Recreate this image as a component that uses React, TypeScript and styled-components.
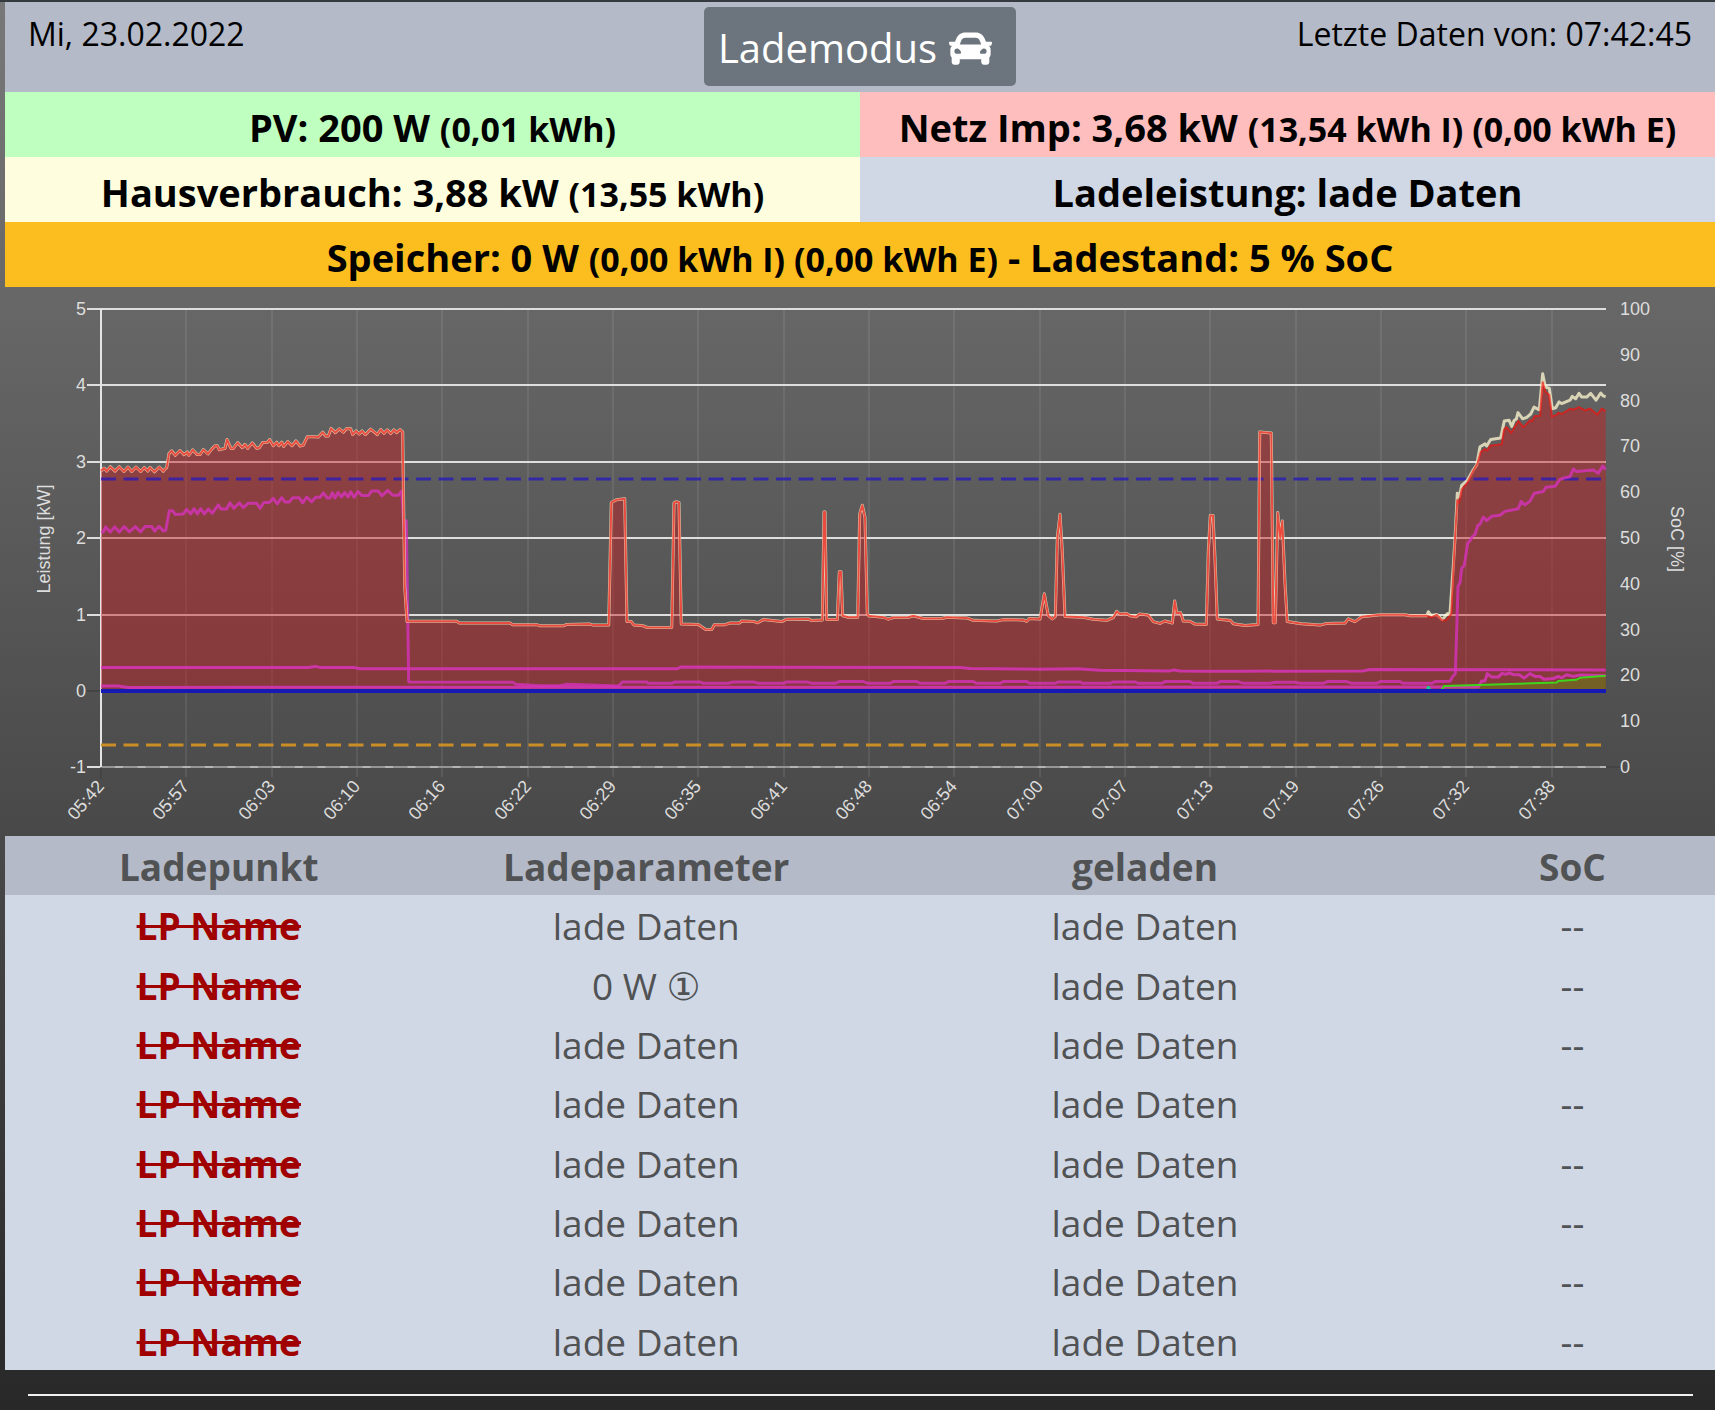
import React from 'react';
import styled, { createGlobalStyle } from 'styled-components';
import { FaCar } from 'react-icons/fa';

const GlobalStyle = createGlobalStyle`
  * { box-sizing: border-box; }
  html { background: #282828; }
  body {
    margin: 0;
    font-family: "Open Sans", "Noto Sans", "Noto Sans CJK JP", sans-serif;
    color: #000;
  }
`;

const Page = styled.div`
  min-height: 100vh;
  padding-left: 5px;
  border-top: 2px solid #343a40;
  background: linear-gradient(#787878, #282828);
`;

const Header = styled.header`
  display: grid;
  grid-template-columns: 1fr auto 1fr;
  align-items: start;
  height: 90px;
  padding: 5px 23px;
  background: #b4bac8;
`;

const HeaderText = styled.div<{ $end?: boolean }>`
  padding-top: 6px;
  font-size: 32px;
  line-height: 42px;
  text-align: ${(p) => (p.$end ? 'right' : 'left')};
`;

const ModeButton = styled.button`
  display: flex;
  align-items: center;
  gap: 12px;
  height: 79px;
  padding: 3px 24px 0 14px;
  border: 0;
  border-radius: 5px;
  background: #6c757d;
  color: #fff;
  font: inherit;
  font-size: 40px;
  line-height: 60px;
  cursor: pointer;
`;

const Metrics = styled.section`
  display: grid;
  grid-template-columns: 1fr 1fr;
`;

const Metric = styled.div<{ $bg: string; $wide?: boolean }>`
  grid-column: ${(p) => (p.$wide ? '1 / -1' : 'auto')};
  height: 65px;
  padding-top: 4px;
  background: ${(p) => p.$bg};
  font-size: 38px;
  font-weight: 700;
  line-height: 62px;
  text-align: center;
  white-space: nowrap;
`;

const Small = styled.span`
  font-size: 34px;
`;

const ChartSvg = styled.svg`
  display: block;
  width: 100%;
  height: auto;
  font-family: "Liberation Sans", Arial, sans-serif;
  font-size: 18px;
  fill: #ddd;
`;

const Table = styled.table`
  width: 100%;
  height: 534px;
  table-layout: fixed;
  border-collapse: collapse;
  background: #d0d8e6;
  color: #505254;
  font-size: 37px;
  line-height: 56px;
  text-align: center;
`;

const HeadRow = styled.tr`
  background: #b4bac8;
`;

const HeadCell = styled.th<{ $width: string }>`
  width: ${(p) => p.$width};
  padding: 3px 0 0;
  font-weight: 700;
`;

const Cell = styled.td`
  padding: 3px 0 0;
`;

const PointName = styled.span`
  color: #a00000;
  font-weight: 700;
  text-decoration: line-through;
  text-decoration-thickness: 3px;
`;

const Phase = styled.span`
  font-family: "DejaVu Sans", sans-serif;
  font-size: 38px;
  line-height: 1;
`;

const Divider = styled.hr`
  height: 2px;
  margin: 24px 22px 0 23px;
  border: 0;
  background: #f0f0f0;
`;

/* Samples are kept in a compact form: each segment has its own start, a sample's
   offset is in thirds of a unit and its level counts down from the chart's top. */
type Segment = [number, string];

const toPoints = (segments: Segment[]) =>
  segments
    .map(([start, samples]) =>
      samples
        .trim()
        .split(/\s+/)
        .map((s) => {
          const [x, y] = s.split(',').map(Number);
          return `${(start + x / 3).toFixed(1)},${(290 + y / 2.9037).toFixed(1)}`;
        })
        .join(' '),
    )
    .join(' ');

const gridBase: Segment[] = [
  [0, `303,525 312,517 320,526 331,513 345,526 358,513 372,527 384,514 395,527 408,514 422,527 433,515 443,526 450,515 463,528 478,514 490,526 500,515 507,475 515,467 526,480 540,466 552,478 562,470 566,480 578,464 592,478 600,478 610,463 624,476 635,462 645,452 652,452 658,464 675,460 681,434 693,460 700,460 713,443 727,458 735,448 743,460 757,444 770,460 778,458 788,443 803,442 809,434 820,452 830,442 837,452 845,442 851,454 863,440 876,452 888,438 900,453 910,450 922,426 945,426 955,427 968,413 977,424 985,424 993,402 1006,414 1018,403 1030,413 1040,402 1052,403 1058,420 1068,409 1078,418 1086,409 1096,420 1112,404 1132,420 1142,405 1152,416 1162,406 1172,417 1182,406 1190,414 1200,405 1208,412 1214,860 1221,962`],
  [400, `170,962 178,967 330,967 338,972 410,972 420,975 490,975 500,971 570,970 580,973 626,973 634,617 650,609 674,606 681,963 694,963 702,973 730,975 742,980 815,980 822,618 828,615 837,617 844,970 895,971 905,978 917,986 935,986 943,972 975,972 990,967 1018,967 1025,961 1062,963 1073,966 1090,957 1145,963 1160,956 1225,955 1235,960 1267,958 1272,645 1275,645 1280,957 1312,957 1318,818 1323,818 1328,946 1345,950 1373,950 1379,650 1387,625 1395,660 1402,940 1407,947`],
  [800, `210,947 250,950 265,956 280,951 325,950 340,946 370,954 425,954 440,950 500,952 520,959 590,961 610,957 670,958 680,962 688,954 720,955 733,882 745,945 757,955 766,948 772,720 780,651 787,760 795,948 850,950 880,956 920,959 940,951 950,933 960,941 980,939 990,946 1008,949 1018,941 1045,944 1060,963 1080,968 1095,961 1117,967 1124,903 1130,938 1142,937 1150,961 1170,962 1185,970 1219,971 1225,760 1231,655 1239,655 1245,780 1252,955 1292,960 1300,969 1335,974 1374,971`],
  [1240, `59,412 94,415 100,966 106,966 113,646 121,720 127,671 135,850 142,963 165,966 185,969 240,973 260,968 315,967 325,955 345,963 365,949 420,943 495,943 510,946 560,946`],
];

const gridImport = toPoints([
  ...gridBase,
  [1240, `575,950 590,943 607,960 620,958 634,940 645,720 652,610 657,618 665,580 682,560 700,525 712,505 722,470 735,462 742,466 750,452 785,448 792,405 800,398 813,415 835,380 850,398 870,378 876,381 884,366 900,365 908,268 916,295 928,305 936,368 950,362 955,356 965,360 990,345 1000,347 1018,340 1035,350 1050,344 1072,362 1085,344 1097,352`],
]);

const house = toPoints([
  ...gridBase,
  [1240, `565,934 573,945 590,942 607,957 622,940 630,938 640,800 645,720 652,590 658,600 665,567 682,553 700,522 710,508 720,455 735,447 740,453 745,445 752,434 782,430 793,380 807,378 815,396 823,378 829,375 834,356 848,374 860,370 872,360 882,340 898,348 908,243 916,282 928,285 937,345 947,342 957,325 965,330 990,320 997,309 1007,316 1017,300 1025,311 1040,311 1052,300 1068,320 1082,299 1090,308 1097,309`],
]);

const loadMain = toPoints([
  [0, `303,704 310,702 317,688 331,703 344,688 358,703 373,687 388,702 406,687 422,702 435,687 455,687 464,700 477,686 490,700 497,698 508,641 518,641 526,652 550,650 560,637 572,650 582,635 592,650 602,635 613,650 625,636 637,648 655,624 663,636 680,636 690,618 702,634 718,618 730,632 745,619 770,619 780,634 792,617 808,617 820,605 832,621 845,603 855,616 868,616 878,603 897,603 908,618 920,601 935,615 947,602 960,602 970,589 982,604 990,604 997,589 1005,604 1014,588 1024,601 1034,588 1044,601 1052,586 1062,602 1074,585 1085,597 1105,597 1115,584 1135,584 1146,598 1163,582 1178,596 1195,596 1205,583 1213,700 1219,670 1226,1138`],
  [400, `338,1139 348,1145 420,1149 480,1149 500,1145 570,1147 655,1150 668,1138 740,1138 745,1142 815,1142 825,1138 900,1138 910,1142 985,1142 1000,1138 1060,1138 1075,1142 1150,1142 1160,1138 1220,1138 1235,1142`],
  [800, `105,1142 118,1137 190,1137 205,1142 270,1142 280,1137 350,1137 362,1142 435,1142 445,1137 520,1137 530,1142 600,1142 610,1137 680,1137 690,1142 765,1142 775,1138 840,1138 848,1142 930,1142 940,1138 1005,1138 1015,1142 1085,1142 1095,1137 1170,1137 1180,1142 1250,1142 1260,1137 1315,1137`],
  [1240, `10,1142 90,1142 105,1139 165,1139 180,1142 250,1142 262,1137 320,1137 335,1142 410,1142 420,1137 480,1137 490,1142 575,1142 585,1137 630,1136 638,1122 646,1115 651,960 654,860 660,850 665,808 673,800 683,735 690,728 697,716 705,710 713,684 720,680 730,659 740,670 755,657 780,654 795,643 835,635 843,614 855,624 870,613 883,590 910,585 918,573 945,570 960,550 975,545 990,542 1000,520 1010,527 1060,523 1075,532 1088,511 1097,521`],
]);

const loadSecond = toPoints([
  [0, `303,1096 925,1096 945,1093 960,1096 1060,1096 1080,1100`],
  [400, `830,1100 842,1095`],
  [800, `480,1096 510,1099 720,1101 830,1100 900,1104 1110,1106 1122,1103 1140,1106 1220,1107`],
  [1240, `0,1107 370,1106 390,1102 1097,1103`],
]);

const loadThird = toPoints([
  [0, `303,1150 355,1150 385,1154`],
  [1240, `0,1153 715,1153 725,1135 735,1135 742,1114 755,1124 775,1124 785,1114 798,1116 808,1112 820,1117 838,1117 852,1127 870,1114 885,1122 900,1122 912,1130 940,1128 955,1122 965,1126 980,1117 1000,1122 1020,1118 1097,1120`],
]);

const pvBlip = toPoints([[1240, `560,1162 563,1153 567,1153 571,1162`]]);
const pv = toPoints([[1240, `605,1162 612,1150 740,1146 950,1140 955,1135 1008,1132 1020,1126 1097,1120`]]);

const LEFT = 101;
const RIGHT = 1606;
const ZERO = 691;
const yOf = (kw: number) => Math.round(ZERO - kw * 76.4);

const times = [
  '05:42', '05:57', '06:03', '06:10', '06:16', '06:22', '06:29', '06:35', '06:41',
  '06:48', '06:54', '07:00', '07:07', '07:13', '07:19', '07:26', '07:32', '07:38',
];

function Chart() {
  const bottom = yOf(-1);
  const top = yOf(5);
  return (
    <ChartSvg viewBox="5 287 1710 549" role="img" aria-label="Leistung und SoC">
      {times.map((t, i) => {
        const x = Math.round(LEFT + i * 85.34);
        return (
          <g key={t}>
            {i > 0 && (
              <line x1={x} x2={x} y1={top} y2={bottom + 10} stroke="rgba(255,255,255,0.08)" strokeWidth="2" />
            )}
            <text textAnchor="end" transform={`translate(${x + 4} 787) rotate(-49)`}>{t}</text>
          </g>
        );
      })}
      {[5, 4, 3, 2, 1, 0, -1].map((v) => (
        <g key={v}>
          {v !== 0 && (
            <line
              x1={LEFT}
              x2={RIGHT}
              y1={yOf(v)}
              y2={yOf(v)}
              stroke={v === -1 ? '#959595' : '#dedede'}
              strokeWidth="2"
            />
          )}
          <line x1={87} x2={LEFT} y1={yOf(v)} y2={yOf(v)} stroke={v === 0 ? '#444' : '#dedede'} strokeWidth="2" />
          <text x={86} y={yOf(v) + 6} textAnchor="end">{v}</text>
        </g>
      ))}
      <line x1={RIGHT} x2={RIGHT + 14} y1={bottom} y2={bottom} stroke="#3c3c3c" strokeWidth="1" />
      <line x1={LEFT} x2={LEFT} y1={bottom} y2={bottom + 12} stroke="#3c3c3c" strokeWidth="1" />
      <line x1={LEFT} x2={LEFT} y1={top} y2={bottom} stroke="#e4e4e4" strokeWidth="2" />
      {[0, 10, 20, 30, 40, 50, 60, 70, 80, 90, 100].map((v) => (
        <text key={v} x={1620} y={Math.round(bottom - v * 4.58) + 6}>{v}</text>
      ))}
      <text textAnchor="middle" transform="translate(50 539) rotate(-90)">Leistung [kW]</text>
      <text textAnchor="middle" transform="translate(1671 539) rotate(90)">SoC [%]</text>

      <g fill="none" strokeLinejoin="round">
        <polygon points={`${LEFT},${ZERO} ${gridImport} ${RIGHT},${ZERO}`} fill="rgba(196,31,33,0.46)" />
        <polygon points={`${pv} ${RIGHT},${ZERO}`} fill="rgba(90,160,0,0.38)" />
        <path d={`M${LEFT} 479H${RIGHT}`} stroke="rgba(38,24,190,0.75)" strokeWidth="3" strokeDasharray="15 7.5" />
        <path d={`M${LEFT} 745H${RIGHT}`} stroke="#cb8d25" strokeWidth="3" strokeDasharray="15 7.5" />
        <path d={`M${LEFT + 14} ${bottom}H${RIGHT}`} stroke="#b4b4b4" strokeWidth="2" strokeDasharray="8 14.5" />
        <polyline points={loadSecond} stroke="rgba(220,52,190,0.82)" strokeWidth="3" />
        <polyline points={loadThird} stroke="rgba(220,52,190,0.82)" strokeWidth="3" />
        <polyline points={loadMain} stroke="rgba(215,50,190,0.78)" strokeWidth="3" />
        <polyline points={house} stroke="rgba(250,245,205,0.78)" strokeWidth="3" />
        <polyline points={gridImport} stroke="rgba(240,20,15,0.7)" strokeWidth="2" />
        <polyline points={pvBlip} stroke="#1fc98a" strokeWidth="2" />
        <polyline points={pv} stroke="#3fd41c" strokeWidth="2" />
        <path d={`M${LEFT} ${ZERO}H${RIGHT}`} stroke="#1719b4" strokeWidth="4" />
      </g>
    </ChartSvg>
  );
}

const loading = 'lade Daten';
const points = Array.from({ length: 8 }, (_, i) => ({
  id: i + 1,
  name: 'LP Name',
  power: i === 1 ? '0 W' : loading,
  phase: i === 1 ? '①' : null,
}));

export default function App() {
  return (
    <Page>
      <GlobalStyle />
      <Header>
        <HeaderText>Mi, 23.02.2022</HeaderText>
        <ModeButton type="button">
          Lademodus
          <FaCar size={43} aria-hidden="true" />
        </ModeButton>
        <HeaderText $end>Letzte Daten von: 07:42:45</HeaderText>
      </Header>
      <Metrics>
        <Metric $bg="#bfffbf">PV: 200 W <Small>(0,01 kWh)</Small></Metric>
        <Metric $bg="#febebe">Netz Imp: 3,68 kW <Small>(13,54 kWh I) (0,00 kWh E)</Small></Metric>
        <Metric $bg="#fefedf">Hausverbrauch: 3,88 kW <Small>(13,55 kWh)</Small></Metric>
        <Metric $bg="#d0d8e6">Ladeleistung: lade Daten</Metric>
        <Metric $bg="#fcbe1e" $wide>
          Speicher: 0 W <Small>(0,00 kWh I) (0,00 kWh E)</Small> - Ladestand: 5 % SoC
        </Metric>
      </Metrics>
      <Chart />
      <Table>
        <thead>
          <HeadRow>
            <HeadCell scope="col" $width="25%">Ladepunkt</HeadCell>
            <HeadCell scope="col" $width="25%">Ladeparameter</HeadCell>
            <HeadCell scope="col" $width="33.333%">geladen</HeadCell>
            <HeadCell scope="col" $width="16.667%">SoC</HeadCell>
          </HeadRow>
        </thead>
        <tbody>
          {points.map((p) => (
            <tr key={p.id}>
              <Cell><PointName>{p.name}</PointName></Cell>
              <Cell>{p.power}{p.phase && <> <Phase>{p.phase}</Phase></>}</Cell>
              <Cell>{loading}</Cell>
              <Cell>--</Cell>
            </tr>
          ))}
        </tbody>
      </Table>
      <Divider />
    </Page>
  );
}
